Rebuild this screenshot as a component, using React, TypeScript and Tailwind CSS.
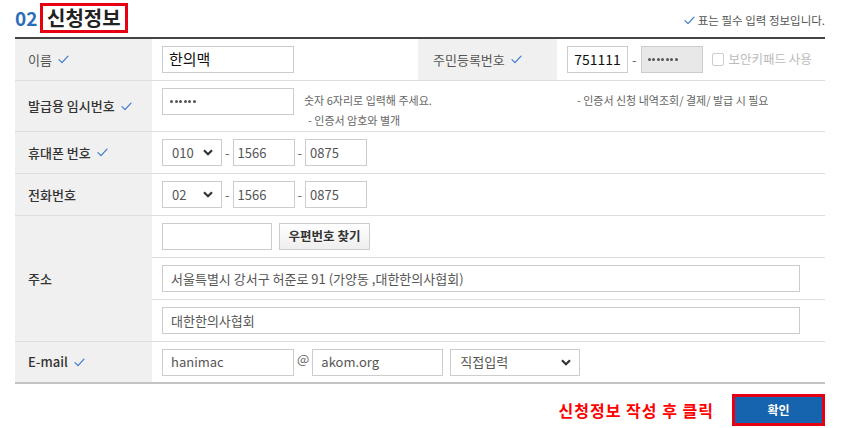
import React from 'react';

const font = { fontFamily: '"Noto Sans CJK KR", "Noto Sans", sans-serif' };

function Check({ className = '' }: { className?: string }) {
  return (
    <svg viewBox="0 0 12 10" className={`w-[11px] h-[9px] ${className}`} fill="none">
      <path d="M1 5.2 L4.3 8.4 L11 1.2" stroke="#3a78d0" strokeWidth="1.3" strokeLinecap="round" strokeLinejoin="round" />
    </svg>
  );
}

function Chevron() {
  return (
    <svg viewBox="0 0 10 7" className="w-[10px] h-[7px]" fill="none">
      <path d="M1 1.2 L5 5.2 L9 1.2" stroke="#333" strokeWidth="2.2" />
    </svg>
  );
}

function Dots({ n, size }: { n: number; size: string }) {
  return (
    <div className="flex gap-[1.5px]">
      {Array.from({ length: n }).map((_, i) => (
        <div key={i} className={`${size} rounded-full bg-[#555]`} />
      ))}
    </div>
  );
}

function Box({ value, w, className = '' }: { value?: string; w: string; className?: string }) {
  return (
    <div className={`h-[27px] border border-[#ccc] flex items-center px-[8px] text-[13px] text-[#555] ${w} ${className}`}>
      {value}
    </div>
  );
}

function Select({ value, w }: { value: string; w: string }) {
  return (
    <div className={`h-[27px] border border-[#ccc] flex items-center justify-between pl-[9px] pr-[8px] text-[13px] text-[#555] bg-white ${w}`}>
      <span>{value}</span>
      <Chevron />
    </div>
  );
}

function Label({ text, check }: { text: string; check?: boolean }) {
  return (
    <div className="bg-[#f0f0f0] flex items-center gap-[6px] pl-[13px] text-[13px] text-[#333] font-medium">
      <span>{text}</span>
      {check && <Check />}
    </div>
  );
}

function Dash() {
  return <span className="text-[13px] text-[#666] px-[3px]">-</span>;
}

export default function App() {
  return (
    <div className="w-[850px] h-[428px] bg-white" style={font}>
      <div className="ml-[15px] w-[810px]">
        <div className="h-[37px] flex justify-between items-start">
          <div className="flex items-center mt-[3px]">
            <span className="text-[19px] font-bold text-[#2a6ebb] w-[25px]">02</span>
            <div className="border-[3px] border-[#e60012] h-[30px] px-[4px] flex items-center text-[20px] font-bold text-[#222] leading-none">
              신청정보
            </div>
          </div>
          <div className="flex items-center gap-[3px] mt-[15px] text-[11.5px] text-[#555] leading-none">
            <Check />
            <span>표는 필수 입력 정보입니다.</span>
          </div>
        </div>

        <div className="border-t-2 border-[#444]">
          {/* 이름 / 주민등록번호 */}
          <div className="grid grid-cols-[137px_266px_139px_1fr] h-[42px] border-b border-[#ddd]">
            <div className="bg-[#f0f0f0] flex items-center gap-[6px] pl-[13px] text-[13px] text-[#555]">
              <span>이름</span>
              <Check />
            </div>
            <div className="flex items-center pl-[10px]">
              <div className="h-[27px] w-[132px] border border-[#ccc] flex items-center px-[6px] text-[15px] text-[#111]">한의맥</div>
            </div>
            <div className="bg-[#f0f0f0] flex items-center gap-[6px] pl-[15px] text-[13px] text-[#555]">
              <span>주민등록번호</span>
              <Check />
            </div>
            <div className="flex items-center pl-[10px]">
              <div className="h-[27px] w-[61px] border border-[#ccc] flex items-center justify-center text-[14px] text-[#111]">751111</div>
              <span className="text-[13px] text-[#666] px-[4px]">-</span>
              <div className="h-[27px] w-[62px] border border-[#ccc] bg-[#e8e8e8] flex items-center pl-[6px]">
                <Dots n={7} size="w-[3px] h-[3px]" />
              </div>
              <div className="ml-[9px] w-[12px] h-[13px] border border-[#ccc] rounded-[2px] bg-white" />
              <span className="ml-[5px] text-[12.5px] text-[#bbb]">보안키패드 사용</span>
            </div>
          </div>

          {/* 발급용 임시번호 */}
          <div className="grid grid-cols-[137px_1fr] h-[51px] border-b border-[#ddd]">
            <Label text="발급용 임시번호" check />
            <div className="flex pl-[10px] pt-[7px]">
              <div className="h-[27px] w-[132px] border border-[#ccc] flex items-center pl-[7px]">
                <Dots n={6} size="w-[3px] h-[3px]" />
              </div>
              <div className="ml-[10px] flex flex-col text-[11px] text-[#666] leading-none">
                <span className="mt-[7px]">숫자 6자리로 입력해 주세요.</span>
                <span className="mt-[9px] ml-[4px]">- 인증서 암호와 별개</span>
              </div>
              <span className="ml-[145px] mt-[7px] text-[11px] text-[#666] leading-none">- 인증서 신청 내역조회/ 결제/ 발급 시 필요</span>
            </div>
          </div>

          {/* 휴대폰 번호 */}
          <div className="grid grid-cols-[137px_1fr] h-[42px] border-b border-[#ddd]">
            <Label text="휴대폰 번호" check />
            <div className="flex items-center pl-[10px]">
              <Select value="010" w="w-[60px]" />
              <Dash />
              <Box value="1566" w="w-[62px]" className="pl-[4px]" />
              <Dash />
              <Box value="0875" w="w-[62px]" className="pl-[4px]" />
            </div>
          </div>

          {/* 전화번호 */}
          <div className="grid grid-cols-[137px_1fr] h-[42px] border-b border-[#ddd]">
            <Label text="전화번호" />
            <div className="flex items-center pl-[10px]">
              <Select value="02" w="w-[60px]" />
              <Dash />
              <Box value="1566" w="w-[62px]" className="pl-[4px]" />
              <Dash />
              <Box value="0875" w="w-[62px]" className="pl-[4px]" />
            </div>
          </div>

          {/* 주소 */}
          <div className="grid grid-cols-[137px_1fr] border-b border-[#ddd]">
            <Label text="주소" />
            <div className="flex flex-col">
              <div className="h-[42px] border-b border-[#ddd] flex items-center pl-[10px] gap-[7px]">
                <Box w="w-[110px]" />
                <div className="h-[27px] w-[91px] border border-[#ccc] bg-gradient-to-b from-white to-[#eee] flex items-center justify-center text-[12.5px] font-bold text-[#333]">
                  우편번호 찾기
                </div>
              </div>
              <div className="h-[42px] border-b border-[#ddd] flex items-center pl-[10px]">
                <Box value="서울특별시 강서구 허준로 91 (가양동 ,대한한의사협회)" w="w-[638px]" className="px-[6px]" />
              </div>
              <div className="h-[41px] flex items-center pl-[10px]">
                <Box value="대한한의사협회" w="w-[638px]" className="px-[6px]" />
              </div>
            </div>
          </div>

          {/* E-mail */}
          <div className="grid grid-cols-[137px_1fr] h-[42px] border-b-2 border-[#c4c4c4]">
            <Label text="E-mail" check />
            <div className="flex items-center pl-[10px]">
              <Box value="hanimac" w="w-[132px]" className="px-[6px]" />
              <span className="text-[13px] text-[#666] px-[3px] -mt-[6px]">@</span>
              <Box value="akom.org" w="w-[131px]" className="px-[6px]" />
              <div className="ml-[7px]">
                <Select value="직접입력" w="w-[130px]" />
              </div>
            </div>
          </div>
        </div>

        <div className="flex justify-end items-center mt-[10px] gap-[18px]">
          <span className="text-[16px] font-bold text-[#ff0000] tracking-[1px]">신청정보 작성 후 클릭</span>
          <div className="w-[93px] h-[32px] border-[3px] border-[#e60012] bg-[#1664ad] flex items-center justify-center text-[12px] font-bold text-white">
            확인
          </div>
        </div>
      </div>
    </div>
  );
}
